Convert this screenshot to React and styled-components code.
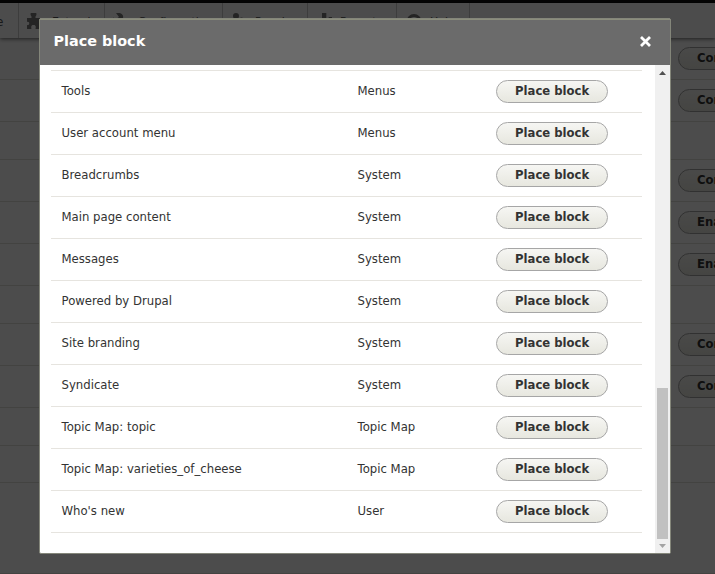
import React from 'react';
import styled, { createGlobalStyle } from 'styled-components';

const GlobalStyle = createGlobalStyle`
  * { box-sizing: border-box; }
  html, body { margin: 0; height: 100%; overflow: hidden; }
  body { background: #fff; color: #333; font: 11.7px/18px "DejaVu Sans", sans-serif; }
`;

const Page = styled.div`
  position: relative;
  width: 715px;
  height: 574px;
  overflow: hidden;
`;
const AdminBar = styled.div`
  height: 3px;
  background: #0f0f0f;
`;
const Tray = styled.nav`
  display: flex;
  height: 35px;
  box-shadow: 0 1px 4px rgba(0, 0, 0, 0.6);
`;
const TrayItem = styled.div`
  display: flex;
  flex: none;
  align-items: center;
  gap: ${(p) => p.$gap || 9}px;
  width: ${(p) => p.$width}px;
  padding: 3px 0 0 8px;
  border-right: 1px solid #ccc;
  color: #565656;
  font-size: 11px;
  white-space: nowrap;
`;
const TrayEdgeLabel = styled.span`
  margin-left: -12px;
  font-size: 12px;
`;
const TrayIcon = styled.svg`
  flex: none;
  width: 16px;
  height: 16px;
  margin-top: -3px;
  fill: #787878;
`;
const BackRow = styled.div`
  display: flex;
  align-items: center;
  height: ${(p) => p.$height}px;
  padding-left: 678px;
  border-bottom: 1px solid #e2e1da;
`;
const Button = styled.button`
  flex: none;
  width: 112px;
  height: 23px;
  padding: 0 0 1px 18px;
  border: 1px solid #a6a6a6;
  border-radius: 20em;
  background: linear-gradient(to bottom, #f6f6f3, #e7e7df);
  color: #333;
  font: 700 11.65px/20px "DejaVu Sans", sans-serif;
  text-align: left;
  white-space: nowrap;
`;
const Overlay = styled.div`
  position: absolute;
  inset: 0;
  background: rgba(0, 0, 0, 0.7);
`;
const Dialog = styled.section`
  position: absolute;
  left: 39px;
  top: 18px;
  display: flex;
  flex-direction: column;
  width: 632px;
  height: 536px;
  border: 1px solid #84867a;
  border-radius: 2px;
  background: #fff;
  overflow: hidden;
`;
const DialogHeader = styled.header`
  display: flex;
  flex: none;
  align-items: center;
  justify-content: space-between;
  height: 46px;
  padding: 0 19.5px 3px 13.5px;
  border-top: 1px solid #8b8d7c;
  background: #6b6b6b;
`;
const DialogTitle = styled.h1`
  margin: 0;
  color: #fff;
  font-size: 14.4px;
  line-height: 20px;
`;
const CloseIcon = styled.svg`
  width: 11px;
  height: 11px;
  stroke: #fff;
  stroke-width: 2.8;
`;
const DialogBody = styled.div`
  display: flex;
  flex: 1;
`;
const BlockList = styled.div`
  flex: 1;
  padding: 5px 13px 0 11px;
`;
const BlockRow = styled.div`
  display: grid;
  grid-template-columns: 296px 138.5px 1fr;
  align-items: center;
  height: 42px;
  padding-left: 10.5px;
  border-top: 1px solid #e6e4df;
  &:last-child { height: 43px; border-bottom: 1px solid #e6e4df; }
`;
const Cell = styled.span`
  padding-bottom: 1px;
`;
const Scrollbar = styled.div`
  display: flex;
  flex-direction: column;
  align-items: center;
  width: 15px;
  background: #f0f0f0;
`;
const Arrow = styled.svg`
  flex: none;
  width: 7px;
  height: 4px;
  margin: ${(p) => p.$margin};
  fill: ${(p) => p.$color};
`;
const Thumb = styled.div`
  width: 11px;
  height: 151px;
  margin-top: auto;
  background: #c1c1c1;
`;

const tray = [
  { label: 'Extend', width: 86, d: 'M0 5h4.500V3.500C3 2 3.500 0 4 0h5c.500 0 1 2-.500 3.500V5H13v11H8.500c.500-2 .500-4-2-4s-2.500 2-2 4H0v-4c3 1 3-4 0-3z' },
  { label: 'Configuration', width: 118, d: 'M3 0c6-1 9 3 6 7l7 7-2 2-7-7C3 10-1 8-1 4l4 2 3-2z' },
  { label: 'People', width: 85, gap: 8, d: 'M2 3a3 3 0 1 1 6 0 3 3 0 0 1-6 0m6 4a2.500 2.500 0 1 1 5 0 2.500 2.500 0 0 1-5 0M0 16V9h7v7z' },
  { label: 'Reports', width: 89, gap: 8, d: 'M6 0h4.300v16H6zM12.700 4H16v12h-3.300zM0 8h4v8H0z' },
  { label: 'Help', width: 73, d: 'M9 1a7.500 7.500 0 1 0 0 15A7.500 7.500 0 0 0 9 1M5 7c0-4 8-4 8 0 0 3-3 2-3 5H8c0-4 3-3 3-5 0-2-4-2-4 0z' },
];

const backRows = [
  [42, 'Configure'], [42, 'Configure'], [38], [42, 'Configure'], [42, 'Enable'], [42, 'Enable'],
  [38], [42, 'Configure'], [42, 'Configure'], [38], [37], [91],
];

const blocks = [
  ['Tools', 'Menus'],
  ['User account menu', 'Menus'],
  ['Breadcrumbs', 'System'],
  ['Main page content', 'System'],
  ['Messages', 'System'],
  ['Powered by Drupal', 'System'],
  ['Site branding', 'System'],
  ['Syndicate', 'System'],
  ['Topic Map: topic', 'Topic Map'],
  ['Topic Map: varieties_of_cheese', 'Topic Map'],
  ["Who's new", 'User'],
];

export default function App() {
  return (
    <Page>
      <GlobalStyle />
      <AdminBar />
      <Tray>
        <TrayItem $width={19}><TrayEdgeLabel>e</TrayEdgeLabel></TrayItem>
        {tray.map((t) => (
          <TrayItem key={t.label} $width={t.width} $gap={t.gap}>
            <TrayIcon viewBox="0 0 16 16" fillRule="evenodd"><path d={t.d} /></TrayIcon>
            {t.label}
          </TrayItem>
        ))}
      </Tray>
      {backRows.map(([height, label], i) => (
        <BackRow key={i} $height={height}>{label && <Button>{label}</Button>}</BackRow>
      ))}
      <Overlay />
      <Dialog>
        <DialogHeader>
          <DialogTitle>Place block</DialogTitle>
          <CloseIcon viewBox="0 0 11 11"><path d="M1 1l9 9M10 1l-9 9" /></CloseIcon>
        </DialogHeader>
        <DialogBody>
          <BlockList>
            {blocks.map(([name, category]) => (
              <BlockRow key={name}>
                <Cell>{name}</Cell>
                <Cell>{category}</Cell>
                <Button>Place block</Button>
              </BlockRow>
            ))}
          </BlockList>
          <Scrollbar>
            <Arrow viewBox="0 0 7 4" $margin="6px 0 0" $color="#505050"><path d="M0 4L3.5 0L7 4z" /></Arrow>
            <Thumb />
            <Arrow viewBox="0 0 7 4" $margin="5px 0 5px" $color="#a3a3a3"><path d="M0 0L3.5 4L7 0z" /></Arrow>
          </Scrollbar>
        </DialogBody>
      </Dialog>
    </Page>
  );
}
